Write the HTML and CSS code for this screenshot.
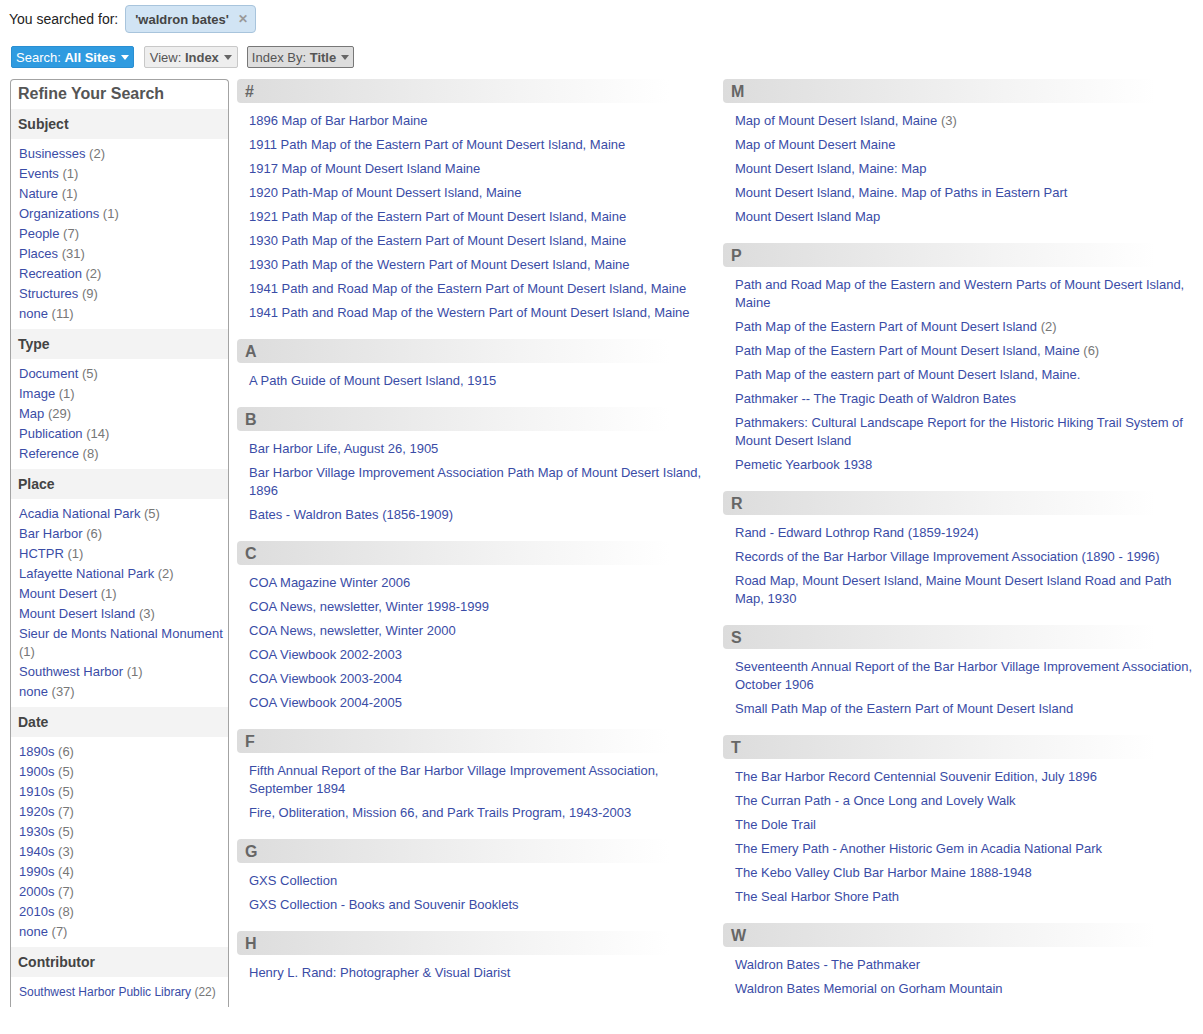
FILE: index.html
```html
<!DOCTYPE html>
<html>
<head>
<meta charset="utf-8">
<link rel="stylesheet" href="styles.css">
</head>
<body>
<div class="page">
  <div class="searched">
    <span class="searched-label">You searched for:</span>
    <span class="tag"><b>'waldron bates'</b><span class="tag-x">&#x2715;</span></span>
  </div>
  <div class="toolbar">
    <span class="btn btn-blue">Search:&nbsp;<b>All Sites</b><span class="caret"></span></span>
    <span class="btn btn-light">View:&nbsp;<b>Index</b><span class="caret"></span></span>
    <span class="btn btn-dark">Index By:&nbsp;<b>Title</b><span class="caret"></span></span>
  </div>
  <div class="layout">
    <aside class="sidebar">
      <div class="side-title">Refine Your Search</div>
      <div class="facet-head">Subject</div>
      <ul class="facet">
        <li><a>Businesses</a> <span class="cnt">(2)</span></li>
        <li><a>Events</a> <span class="cnt">(1)</span></li>
        <li><a>Nature</a> <span class="cnt">(1)</span></li>
        <li><a>Organizations</a> <span class="cnt">(1)</span></li>
        <li><a>People</a> <span class="cnt">(7)</span></li>
        <li><a>Places</a> <span class="cnt">(31)</span></li>
        <li><a>Recreation</a> <span class="cnt">(2)</span></li>
        <li><a>Structures</a> <span class="cnt">(9)</span></li>
        <li><a>none</a> <span class="cnt">(11)</span></li>
      </ul>
      <div class="facet-head">Type</div>
      <ul class="facet">
        <li><a>Document</a> <span class="cnt">(5)</span></li>
        <li><a>Image</a> <span class="cnt">(1)</span></li>
        <li><a>Map</a> <span class="cnt">(29)</span></li>
        <li><a>Publication</a> <span class="cnt">(14)</span></li>
        <li><a>Reference</a> <span class="cnt">(8)</span></li>
      </ul>
      <div class="facet-head">Place</div>
      <ul class="facet">
        <li><a>Acadia National Park</a> <span class="cnt">(5)</span></li>
        <li><a>Bar Harbor</a> <span class="cnt">(6)</span></li>
        <li><a>HCTPR</a> <span class="cnt">(1)</span></li>
        <li><a>Lafayette National Park</a> <span class="cnt">(2)</span></li>
        <li><a>Mount Desert</a> <span class="cnt">(1)</span></li>
        <li><a>Mount Desert Island</a> <span class="cnt">(3)</span></li>
        <li><a>Sieur de Monts National Monument</a> <span class="cnt">(1)</span></li>
        <li><a>Southwest Harbor</a> <span class="cnt">(1)</span></li>
        <li><a>none</a> <span class="cnt">(37)</span></li>
      </ul>
      <div class="facet-head">Date</div>
      <ul class="facet">
        <li><a>1890s</a> <span class="cnt">(6)</span></li>
        <li><a>1900s</a> <span class="cnt">(5)</span></li>
        <li><a>1910s</a> <span class="cnt">(5)</span></li>
        <li><a>1920s</a> <span class="cnt">(7)</span></li>
        <li><a>1930s</a> <span class="cnt">(5)</span></li>
        <li><a>1940s</a> <span class="cnt">(3)</span></li>
        <li><a>1990s</a> <span class="cnt">(4)</span></li>
        <li><a>2000s</a> <span class="cnt">(7)</span></li>
        <li><a>2010s</a> <span class="cnt">(8)</span></li>
        <li><a>none</a> <span class="cnt">(7)</span></li>
      </ul>
      <div class="facet-head">Contributor</div>
      <ul class="facet facet-small">
        <li><a>Southwest Harbor Public Library</a> <span class="cnt">(22)</span></li>
      </ul>
    </aside>
    <main class="index">
      <div class="col">
        <section class="group">
          <h3 class="letter">#</h3>
          <ul class="titles">
            <li><a>1896 Map of Bar Harbor Maine</a></li>
            <li><a>1911 Path Map of the Eastern Part of Mount Desert Island, Maine</a></li>
            <li><a>1917 Map of Mount Desert Island Maine</a></li>
            <li><a>1920 Path-Map of Mount Dessert Island, Maine</a></li>
            <li><a>1921 Path Map of the Eastern Part of Mount Desert Island, Maine</a></li>
            <li><a>1930 Path Map of the Eastern Part of Mount Desert Island, Maine</a></li>
            <li><a>1930 Path Map of the Western Part of Mount Desert Island, Maine</a></li>
            <li><a>1941 Path and Road Map of the Eastern Part of Mount Desert Island, Maine</a></li>
            <li><a>1941 Path and Road Map of the Western Part of Mount Desert Island, Maine</a></li>
          </ul>
        </section>
        <section class="group">
          <h3 class="letter">A</h3>
          <ul class="titles">
            <li><a>A Path Guide of Mount Desert Island, 1915</a></li>
          </ul>
        </section>
        <section class="group">
          <h3 class="letter">B</h3>
          <ul class="titles">
            <li><a>Bar Harbor Life, August 26, 1905</a></li>
            <li><a>Bar Harbor Village Improvement Association Path Map of Mount Desert Island, 1896</a></li>
            <li><a>Bates - Waldron Bates (1856-1909)</a></li>
          </ul>
        </section>
        <section class="group">
          <h3 class="letter">C</h3>
          <ul class="titles">
            <li><a>COA Magazine Winter 2006</a></li>
            <li><a>COA News, newsletter, Winter 1998-1999</a></li>
            <li><a>COA News, newsletter, Winter 2000</a></li>
            <li><a>COA Viewbook 2002-2003</a></li>
            <li><a>COA Viewbook 2003-2004</a></li>
            <li><a>COA Viewbook 2004-2005</a></li>
          </ul>
        </section>
        <section class="group">
          <h3 class="letter">F</h3>
          <ul class="titles">
            <li><a>Fifth Annual Report of the Bar Harbor Village Improvement Association, September 1894</a></li>
            <li><a>Fire, Obliteration, Mission 66, and Park Trails Program, 1943-2003</a></li>
          </ul>
        </section>
        <section class="group">
          <h3 class="letter">G</h3>
          <ul class="titles">
            <li><a>GXS Collection</a></li>
            <li><a>GXS Collection - Books and Souvenir Booklets</a></li>
          </ul>
        </section>
        <section class="group">
          <h3 class="letter">H</h3>
          <ul class="titles">
            <li><a>Henry L. Rand: Photographer &amp; Visual Diarist</a></li>
          </ul>
        </section>
      </div>
      <div class="col">
        <section class="group">
          <h3 class="letter">M</h3>
          <ul class="titles">
            <li><a>Map of Mount Desert Island, Maine</a> <span class="cnt">(3)</span></li>
            <li><a>Map of Mount Desert Maine</a></li>
            <li><a>Mount Desert Island, Maine: Map</a></li>
            <li><a>Mount Desert Island, Maine. Map of Paths in Eastern Part</a></li>
            <li><a>Mount Desert Island Map</a></li>
          </ul>
        </section>
        <section class="group">
          <h3 class="letter">P</h3>
          <ul class="titles">
            <li><a>Path and Road Map of the Eastern and Western Parts of Mount Desert Island, Maine</a></li>
            <li><a>Path Map of the Eastern Part of Mount Desert Island</a> <span class="cnt">(2)</span></li>
            <li><a>Path Map of the Eastern Part of Mount Desert Island, Maine</a> <span class="cnt">(6)</span></li>
            <li><a>Path Map of the eastern part of Mount Desert Island, Maine.</a></li>
            <li><a>Pathmaker -- The Tragic Death of Waldron Bates</a></li>
            <li><a>Pathmakers: Cultural Landscape Report for the Historic Hiking Trail System of Mount Desert Island</a></li>
            <li><a>Pemetic Yearbook 1938</a></li>
          </ul>
        </section>
        <section class="group">
          <h3 class="letter">R</h3>
          <ul class="titles">
            <li><a>Rand - Edward Lothrop Rand (1859-1924)</a></li>
            <li><a>Records of the Bar Harbor Village Improvement Association (1890 - 1996)</a></li>
            <li><a>Road Map, Mount Desert Island, Maine Mount Desert Island Road and Path Map, 1930</a></li>
          </ul>
        </section>
        <section class="group">
          <h3 class="letter">S</h3>
          <ul class="titles">
            <li><a>Seventeenth Annual Report of the Bar Harbor Village Improvement Association, October 1906</a></li>
            <li><a>Small Path Map of the Eastern Part of Mount Desert Island</a></li>
          </ul>
        </section>
        <section class="group">
          <h3 class="letter">T</h3>
          <ul class="titles">
            <li><a>The Bar Harbor Record Centennial Souvenir Edition, July 1896</a></li>
            <li><a>The Curran Path - a Once Long and Lovely Walk</a></li>
            <li><a>The Dole Trail</a></li>
            <li><a>The Emery Path - Another Historic Gem in Acadia National Park</a></li>
            <li><a>The Kebo Valley Club Bar Harbor Maine 1888-1948</a></li>
            <li><a>The Seal Harbor Shore Path</a></li>
          </ul>
        </section>
        <section class="group">
          <h3 class="letter">W</h3>
          <ul class="titles">
            <li><a>Waldron Bates - The Pathmaker</a></li>
            <li><a>Waldron Bates Memorial on Gorham Mountain</a></li>
          </ul>
        </section>
      </div>
    </main>
  </div>
</div>
</body>
</html>
```

FILE: styles.css
```css
* { box-sizing: border-box; }
html, body { margin: 0; padding: 0; background: #fff; }
body {
  font-family: "Liberation Sans", Arial, sans-serif;
  font-size: 13px;
  color: #333;
}
.page { padding: 5px 10px 0 10px; }

.searched { display: flex; align-items: center; gap: 7px; height: 28px; margin-left: -1px; }
.searched-label { font-size: 14px; color: #222; }
.tag {
  display: inline-flex; align-items: center;
  height: 28px;
  padding: 0 7px 0 9px;
  background: #d1e4f4;
  border: 1px solid #a8c4dc;
  border-radius: 4px;
  font-size: 13px;
  color: #444;
}
.tag-x { color: #999; font-size: 12px; margin-left: 9px; font-weight: bold; }

.toolbar { display: flex; gap: 10px; margin-top: 13px; margin-left: 1px; }
.btn {
  display: inline-flex; align-items: center;
  height: 22px;
  padding: 0 4px 0 4px;
  font-size: 13px;
  border-radius: 2px;
}
.btn-blue { background: #2f9be0; color: #fff; border: 1px solid #2a8fd2; }
.btn-light { background: #eeeeee; color: #555; border: 1px solid #c8c8c8; padding: 0 5px 0 5px; }
.btn-dark { background: #dddddd; color: #555; border: 1px solid #777; margin-left: -1px; padding: 0 4px 0 4px; }
.caret {
  width: 0; height: 0;
  border-left: 4px solid transparent;
  border-right: 4px solid transparent;
  border-top: 5px solid currentColor;
  margin-left: 5px;
}
.btn-light .caret, .btn-dark .caret { color: #666; }

.layout { display: flex; align-items: flex-start; margin-top: 11px; }

.sidebar {
  width: 219px;
  flex: 0 0 219px;
  border: 1px solid #a3a3a3;
  border-bottom: none;
  border-radius: 4px 4px 0 0;
}
.side-title {
  font-size: 16px; font-weight: bold; color: #555;
  line-height: 20px;
  padding: 4px 7px 5px 7px;
}
.facet-head {
  background: #f3f3f3;
  font-size: 14px; font-weight: bold; color: #444;
  line-height: 20px;
  padding: 5px 7px;
}
.facet { list-style: none; margin: 0; padding: 4px 4px 6px 8px; }
.facet li { line-height: 18px; padding: 2px 0 0 0; }
.facet-small li { font-size: 12px; }
a { color: #3a4ca6; text-decoration: none; }
.cnt { color: #777; }

.index {
  flex: 1;
  margin-left: 8px;
  display: grid;
  grid-template-columns: 470px 470px;
  column-gap: 16px;
  align-items: start;
}
.group { margin-bottom: 15px; }
.letter {
  margin: 0;
  height: 24px;
  line-height: 22px;
  padding: 2px 0 0 8px;
  font-size: 16px; font-weight: bold; color: #666;
  background: linear-gradient(to right, #dcdcdc 0%, #f4f4f4 60%, #ffffff 92%);
  border-radius: 4px 0 0 4px;
}
.titles { list-style: none; margin: 0; padding: 5px 0 0 12px; }
.titles li { line-height: 18px; padding: 4px 0 2px 0; }
```
